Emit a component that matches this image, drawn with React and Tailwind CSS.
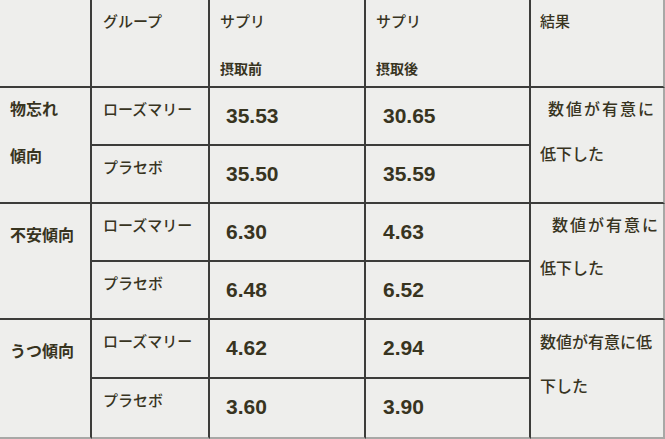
export default function App() {
  const line = "border-r-2 border-b-2 border-[#3c3c3a]";
  const lastCol = "border-r-2 border-b-2 border-r-[#a8a8a6] border-b-[#3c3c3a]";
  const num = "pl-[16px] pt-[14px] text-[21px] leading-[28px] font-bold";
  const grp = "pl-[11px] pt-[11px] text-[15px] leading-[22px] font-medium";
  const lbl = "pl-[10px] text-[16px] font-bold";
  const bottom = "border-b-[#a8a8a6]";
  return (
    <div className="w-[665px] h-[439px] bg-[#eeeeec] text-[#38341f] font-['Liberation_Sans','Noto_Sans_CJK_JP',sans-serif] overflow-hidden">
      <div className="grid grid-cols-[92px_118px_156px_165px_134px] grid-rows-[88px_58px_58px_58px_58px_59px_60px]">
        {/* header */}
        <div className={line}></div>
        <div className={`${line} pl-[11px] text-[15px] leading-[44px] font-medium`}>グループ</div>
        <div className={`${line} pl-[10px] text-[15px] font-medium`}>
          <div className="leading-[44px]">サプリ</div>
          <div className="leading-[50px] text-[14px] font-bold">摂取前</div>
        </div>
        <div className={`${line} pl-[10px] text-[15px] font-medium`}>
          <div className="leading-[44px]">サプリ</div>
          <div className="leading-[50px] text-[14px] font-bold">摂取後</div>
        </div>
        <div className={`${lastCol} pl-[9px] text-[15px] leading-[44px] font-medium`}>結果</div>

        {/* 物忘れ傾向 */}
        <div className={`${line} row-span-2 ${lbl}`}>
          <div className="leading-[44px]">物忘れ</div>
          <div className="leading-[50px]">傾向</div>
        </div>
        <div className={`${line} ${grp}`}>ローズマリー</div>
        <div className={`${line} ${num}`}>35.53</div>
        <div className={`${line} ${num} pl-[17px]`}>30.65</div>
        <div className={`${lastCol} row-span-2 text-[16px] font-medium`}>
          <div className="pl-[17px] leading-[44px] tracking-[2px]">数値が有意に</div>
          <div className="pl-[9px] leading-[46px]">低下した</div>
        </div>
        <div className={`${line} ${grp}`}>プラセボ</div>
        <div className={`${line} ${num}`}>35.50</div>
        <div className={`${line} ${num} pl-[17px]`}>35.59</div>

        {/* 不安傾向 */}
        <div className={`${line} row-span-2 ${lbl} pt-[10px] leading-[44px]`}>不安傾向</div>
        <div className={`${line} ${grp}`}>ローズマリー</div>
        <div className={`${line} ${num}`}>6.30</div>
        <div className={`${line} ${num} pl-[17px]`}>4.63</div>
        <div className={`${lastCol} row-span-2 text-[16px] font-medium`}>
          <div className="pl-[21px] leading-[44px] tracking-[2px]">数値が有意に</div>
          <div className="pl-[9px] leading-[42px]">低下した</div>
        </div>
        <div className={`${line} ${grp}`}>プラセボ</div>
        <div className={`${line} ${num}`}>6.48</div>
        <div className={`${line} ${num} pl-[17px]`}>6.52</div>

        {/* うつ傾向 */}
        <div className={`${line} ${bottom} row-span-2 ${lbl} pt-[10px] leading-[44px]`}>うつ傾向</div>
        <div className={`${line} ${grp}`}>ローズマリー</div>
        <div className={`${line} ${num}`}>4.62</div>
        <div className={`${line} ${num} pl-[17px]`}>2.94</div>
        <div className={`${lastCol} ${bottom} row-span-2 text-[16px] pl-[9px] font-medium`}>
          <div className="leading-[46px]">数値が有意に低</div>
          <div className="leading-[42px]">下した</div>
        </div>
        <div className={`${line} ${bottom} ${grp}`}>プラセボ</div>
        <div className={`${line} ${bottom} ${num}`}>3.60</div>
        <div className={`${line} ${bottom} ${num} pl-[17px]`}>3.90</div>
      </div>
    </div>
  );
}
